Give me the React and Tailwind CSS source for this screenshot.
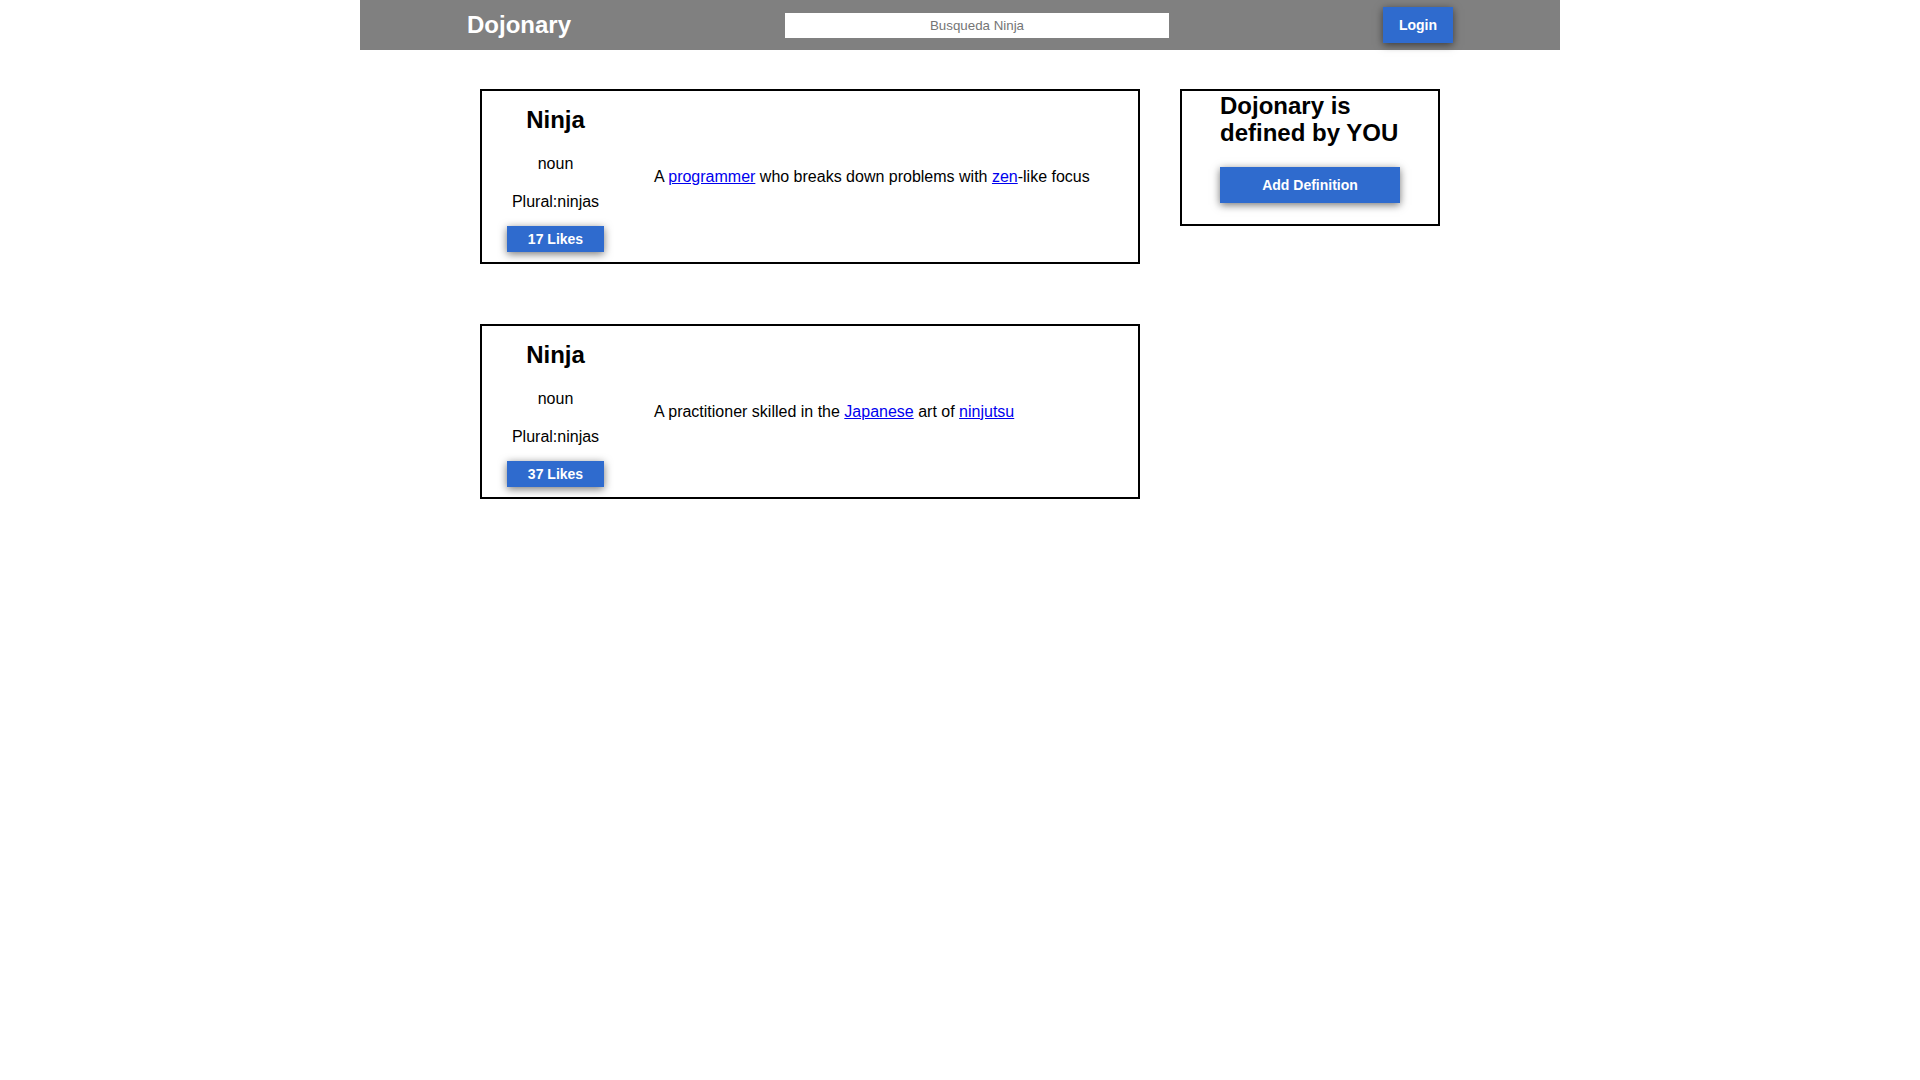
import React from "react";

const btn =
  "bg-[#2f6bce] text-white font-bold text-[14px] shadow-[0_2px_8px_rgba(0,0,0,0.55)] flex items-center justify-center";

function Card({ likes, children }) {
  return (
    <div className="border-2 border-black flex items-center bg-white">
      <div className="w-[147px] flex flex-col items-center pt-[15px] pb-[10px]">
        <div className="text-[24px] leading-[28px] font-bold text-black">Ninja</div>
        <div className="text-[16px] leading-[18px] mt-[21px] text-black">noun</div>
        <div className="text-[16px] leading-[18px] mt-[20px] text-black">Plural:ninjas</div>
        <button className={btn + " w-[97px] h-[26px] mt-[15px]"}>{likes} Likes</button>
      </div>
      <div className="ml-[25px] text-[16px] leading-[18px] text-black">{children}</div>
    </div>
  );
}

const link = "text-[#0000ee] underline";

export default function App() {
  return (
    <div className="min-h-screen bg-white" style={{ fontFamily: '"Liberation Sans", Arial, sans-serif' }}>
      <header className="w-[1200px] h-[50px] mx-auto bg-[#808080] flex items-center justify-around">
        <div className="text-[24px] font-bold text-white leading-[28px]">Dojonary</div>
        <input
          className="w-[384px] h-[25px] bg-white text-center text-[13.33px] outline-none placeholder:text-[#757575]"
          placeholder="Busqueda Ninja"
        />
        <button className={btn + " w-[70px] h-[36px]"}>Login</button>
      </header>
      <main className="w-[960px] mx-auto mt-[39px] flex items-start">
        <div className="w-[660px] flex flex-col gap-[60px]">
          <Card likes={17}>
            A <a className={link} href="#">programmer</a> who breaks down problems with{" "}
            <a className={link} href="#">zen</a>-like focus
          </Card>
          <Card likes={37}>
            A practitioner skilled in the <a className={link} href="#">Japanese</a> art of{" "}
            <a className={link} href="#">ninjutsu</a>
          </Card>
        </div>
        <aside className="w-[260px] ml-[40px] border-2 border-black flex flex-col items-center pt-[1px] pb-[21px]">
          <div className="w-[180px] text-[24px] leading-[27px] font-bold text-black">
            Dojonary is defined by YOU
          </div>
          <button className={btn + " w-[180px] h-[36px] mt-[21px]"}>Add Definition</button>
        </aside>
      </main>
    </div>
  );
}
